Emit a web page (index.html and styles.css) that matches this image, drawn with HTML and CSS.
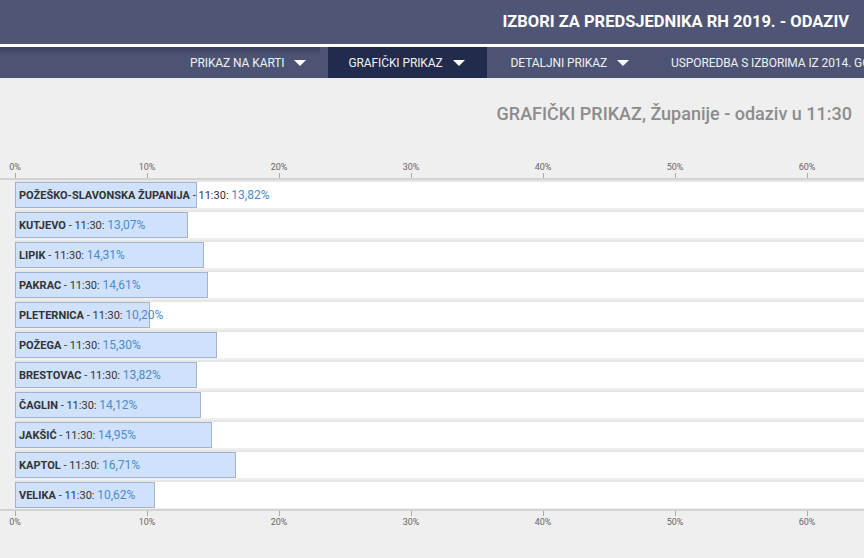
FILE: index.html
```html
<!DOCTYPE html>
<html lang="hr">
<head>
    <meta charset="UTF-8">
    <title>Izbori za predsjednika RH 2019. - odaziv</title>
    <link rel="stylesheet" href="styles.css">
</head>
<body>
<div class="header">
    <h1>IZBORI ZA PREDSJEDNIKA RH 2019. - ODAZIV</h1>
</div>
<div class="nav">
    <a class="nav-item">PRIKAZ NA KARTI <span class="caret"></span></a>
    <a class="nav-item active">GRAFIČKI PRIKAZ <span class="caret"></span></a>
    <a class="nav-item">DETALJNI PRIKAZ <span class="caret"></span></a>
    <a class="nav-item">USPOREDBA S IZBORIMA IZ 2014. GODINE <span class="caret"></span></a>
</div>
<div class="main">
    <h2 class="chart-title">GRAFIČKI PRIKAZ, Županije - odaziv u 11:30</h2>
    <div class="chart">
        <div class="axis axis-top">
            <span>0%</span><span>10%</span><span>20%</span><span>30%</span><span>40%</span><span>50%</span><span>60%</span>
        </div>
        <div class="rows">
            <div class="row"><div class="bar" style="width:182px"></div><div class="label"><b>POŽEŠKO-SLAVONSKA ŽUPANIJA</b> - 11:30: <em>13,82%</em></div></div>
            <div class="row"><div class="bar" style="width:173px"></div><div class="label"><b>KUTJEVO</b> - 11:30: <em>13,07%</em></div></div>
            <div class="row"><div class="bar" style="width:189px"></div><div class="label"><b>LIPIK</b> - 11:30: <em>14,31%</em></div></div>
            <div class="row"><div class="bar" style="width:193px"></div><div class="label"><b>PAKRAC</b> - 11:30: <em>14,61%</em></div></div>
            <div class="row"><div class="bar" style="width:135px"></div><div class="label"><b>PLETERNICA</b> - 11:30: <em>10,20%</em></div></div>
            <div class="row"><div class="bar" style="width:202px"></div><div class="label"><b>POŽEGA</b> - 11:30: <em>15,30%</em></div></div>
            <div class="row"><div class="bar" style="width:182px"></div><div class="label"><b>BRESTOVAC</b> - 11:30: <em>13,82%</em></div></div>
            <div class="row"><div class="bar" style="width:186px"></div><div class="label"><b>ČAGLIN</b> - 11:30: <em>14,12%</em></div></div>
            <div class="row"><div class="bar" style="width:197px"></div><div class="label"><b>JAKŠIĆ</b> - 11:30: <em>14,95%</em></div></div>
            <div class="row"><div class="bar" style="width:221px"></div><div class="label"><b>KAPTOL</b> - 11:30: <em>16,71%</em></div></div>
            <div class="row"><div class="bar" style="width:140px"></div><div class="label"><b>VELIKA</b> - 11:30: <em>10,62%</em></div></div>
        </div>
        <div class="axis axis-bottom">
            <span>0%</span><span>10%</span><span>20%</span><span>30%</span><span>40%</span><span>50%</span><span>60%</span>
        </div>
    </div>
</div>
</body>
</html>
```

FILE: styles.css
```css
* {
    margin: 0;
    padding: 0;
    box-sizing: border-box;
}
body {
    background-color: #efefef;
    font-family: Roboto, "Liberation Sans", sans-serif;
    overflow: hidden;
}
.header {
    height: 47px;
    background-color: #4f5675;
    display: flex;
    align-items: center;
    justify-content: flex-end;
    padding-right: 15px;
    padding-bottom: 2px;
    border-bottom: 3px solid #fff;
}
.header h1 {
    color: #fff;
    font-size: 16.5px;
    font-weight: 700;
}
.nav {
    height: 31px;
    background: linear-gradient(to bottom, rgba(25, 30, 50, .35), rgba(25, 30, 50, 0) 9px) no-repeat 0 0 / 320px 100%, #4d5473;
    display: flex;
    padding-left: 170px;
    white-space: nowrap;
    overflow: hidden;
}
.nav-item {
    display: flex;
    align-items: center;
    padding: 0 22px 0 20px;
    color: #eef0f5;
    font-size: 12px;
    letter-spacing: -0.1px;
    flex-shrink: 0;
}
.nav-item.active {
    background-color: #222b4c;
}
.nav-item.active + .nav-item {
    padding-left: 24px;
}
.caret {
    margin-left: 10px;
    width: 0;
    height: 0;
    border-left: 6px solid transparent;
    border-right: 6px solid transparent;
    border-top: 6px solid #fff;
}
.main {
    padding-top: 24px;
}
.chart-title {
    text-align: right;
    padding-right: 12px;
    font-size: 18px;
    line-height: 24px;
    font-weight: 500;
    color: #8c8c8c;
}
.chart {
    margin-top: 35px;
    padding-left: 15px;
}
.axis {
    display: flex;
    margin-left: -66px;
    font-size: 9px;
    color: #666;
}
.axis span {
    flex: 0 0 132px;
    text-align: center;
    line-height: 12px;
}
.axis-top {
    height: 19px;
    border-bottom: 2px solid #d3d3d3;
}
.axis-top span::after,
.axis-bottom span::before {
    content: "";
    display: block;
    width: 1px;
    height: 5px;
    margin: 0 auto;
    background-color: #aaa;
}
.axis-bottom {
    margin-top: 1px;
    border-top: 2px solid #d3d3d3;
}
.rows {
    display: flex;
    flex-direction: column;
    gap: 4px;
    padding-top: 2px;
}
.row {
    display: grid;
    height: 26px;
    background-color: #fff;
    box-shadow: 0 -2px 0 #e6e6e6;
}
.bar,
.label {
    grid-area: 1 / 1;
}
.bar {
    background-color: #cfe1fb;
    border: 1px solid #a3b3cf;
}
.label {
    align-self: center;
    padding-left: 4px;
    font-size: 11px;
    color: #333;
    white-space: nowrap;
}
.label b {
    font-weight: 700;
}
.label em {
    font-style: normal;
    font-size: 12px;
    color: #4a8cca;
}
```
